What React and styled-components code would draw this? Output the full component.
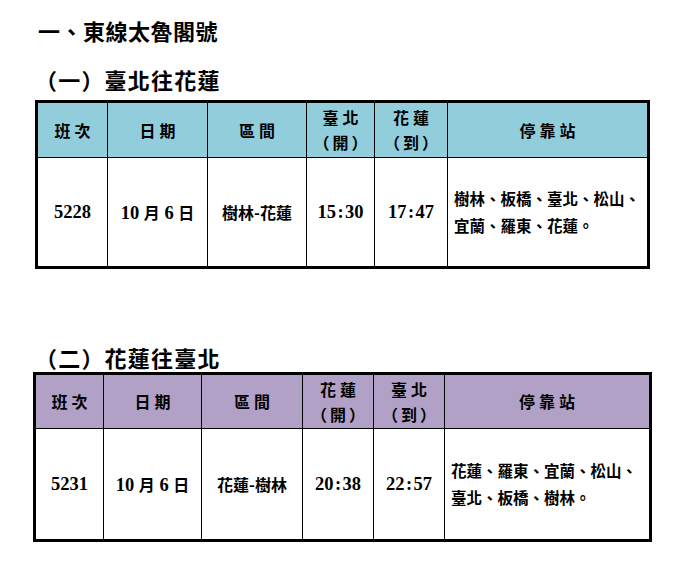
import styled, { createGlobalStyle } from 'styled-components'

const GlobalStyle = createGlobalStyle`
  html, body {
    margin: 0;
    padding: 0;
    background: #fff;
  }
  body {
    font-family: "Liberation Serif", "Noto Sans CJK TC", serif;
    color: #000;
  }
`

const Page = styled.div`
  width: 683px;
  height: 571px;
  padding-top: 16px;
  box-sizing: border-box;
  overflow: hidden;
`

const Title = styled.h1`
  margin: 0 0 0 38px;
  font-family: "Noto Sans CJK TC", sans-serif;
  font-size: 22px;
  line-height: 28px;
  font-weight: 700;
  letter-spacing: 0.5px;
`

const Section = styled.section`
  margin-top: ${(p) => p.$top}px;
`

const SectionTitle = styled.h2`
  margin: 0 0 ${(p) => p.$gap}px ${(p) => p.$left}px;
  font-family: "Noto Sans CJK TC", sans-serif;
  font-size: 22px;
  line-height: 28px;
  font-weight: 700;
  letter-spacing: 1.2px;
`

const Table = styled.table`
  margin-left: ${(p) => p.$left}px;
  border-collapse: collapse;
  table-layout: fixed;
  border: 3px solid #000;
`

const HeadCell = styled.th`
  height: ${(p) => p.$height}px;
  padding: 0 0 0 4px;
  background: ${(p) => p.$bg};
  border: 1px solid #000;
  font-family: "Noto Sans CJK TC", sans-serif;
  font-size: 16px;
  font-weight: 700;
  line-height: 25px;
  letter-spacing: 4px;
  text-align: center;
  vertical-align: middle;
`

const Paren = styled.span`
  display: block;
  letter-spacing: 3px;
  margin-left: -1px;
`

const Cell = styled.td`
  height: ${(p) => p.$height}px;
  padding: 0 4px;
  border: 1px solid #000;
  font-size: 18.5px;
  font-weight: 700;
  text-align: center;
  vertical-align: middle;
  white-space: nowrap;
`

const Colon = styled.span`
  padding: 0 1.5px;
`

const StopsCell = styled.td`
  padding: 0 4px 0 6px;
  border: 1px solid #000;
  font-family: "Noto Sans CJK TC", sans-serif;
  font-size: 15.5px;
  line-height: 27px;
  font-weight: 700;
  text-align: left;
  vertical-align: middle;
`

const Cjk = styled.span`
  font-family: "Noto Sans CJK TC", sans-serif;
  font-size: 16px;
`

const Time = ({ value }) => {
  const [h, m] = value.split(':')
  return (
    <>
      {h}
      <Colon>:</Colon>
      {m}
    </>
  )
}

const Timetable = ({ bg, cols, left, headH, bodyH, from, to, row }) => (
  <Table $left={left}>
    <colgroup>
      {cols.map((w, i) => (
        <col key={i} style={{ width: w }} />
      ))}
    </colgroup>
    <thead>
      <tr>
        <HeadCell $bg={bg} $height={headH}>班次</HeadCell>
        <HeadCell $bg={bg} $height={headH}>日期</HeadCell>
        <HeadCell $bg={bg} $height={headH}>區間</HeadCell>
        <HeadCell $bg={bg} $height={headH}>
          {from}
          <Paren>（開）</Paren>
        </HeadCell>
        <HeadCell $bg={bg} $height={headH}>
          {to}
          <Paren>（到）</Paren>
        </HeadCell>
        <HeadCell $bg={bg} $height={headH}>停靠站</HeadCell>
      </tr>
    </thead>
    <tbody>
      <tr>
        <Cell $height={bodyH}>{row.no}</Cell>
        <Cell $height={bodyH}>
          10 <Cjk>月</Cjk> 6 <Cjk>日</Cjk>
        </Cell>
        <Cell $height={bodyH}>
          <Cjk>{row.range}</Cjk>
        </Cell>
        <Cell $height={bodyH}>
          <Time value={row.dep} />
        </Cell>
        <Cell $height={bodyH}>
          <Time value={row.arr} />
        </Cell>
        <StopsCell>
          {row.stops[0]}
          <br />
          {row.stops[1]}
        </StopsCell>
      </tr>
    </tbody>
  </Table>
)

export default function App() {
  return (
    <Page>
      <GlobalStyle />
      <Title>一、東線太魯閣號</Title>

      <Section $top={21}>
        <SectionTitle $left={35} $gap={7}>（一）臺北往花蓮</SectionTitle>
        <Timetable
          bg="#92cddc"
          left={35}
          cols={[71, 100, 99, 68, 73, 201]}
          headH={54}
          bodyH={108}
          from="臺北"
          to="花蓮"
          row={{
            no: '5228',
            range: '樹林-花蓮',
            dep: '15:30',
            arr: '17:47',
            stops: ['樹林、板橋、臺北、松山、', '宜蘭、羅東、花蓮。'],
          }}
        />
      </Section>

      <Section $top={74}>
        <SectionTitle $left={35} $gap={1}>（二）花蓮往臺北</SectionTitle>
        <Timetable
          bg="#b2a1c7"
          left={33}
          cols={[69, 98, 101, 71, 71, 206]}
          headH={53}
          bodyH={110}
          from="花蓮"
          to="臺北"
          row={{
            no: '5231',
            range: '花蓮-樹林',
            dep: '20:38',
            arr: '22:57',
            stops: ['花蓮、羅東、宜蘭、松山、', '臺北、板橋、樹林。'],
          }}
        />
      </Section>
    </Page>
  )
}
